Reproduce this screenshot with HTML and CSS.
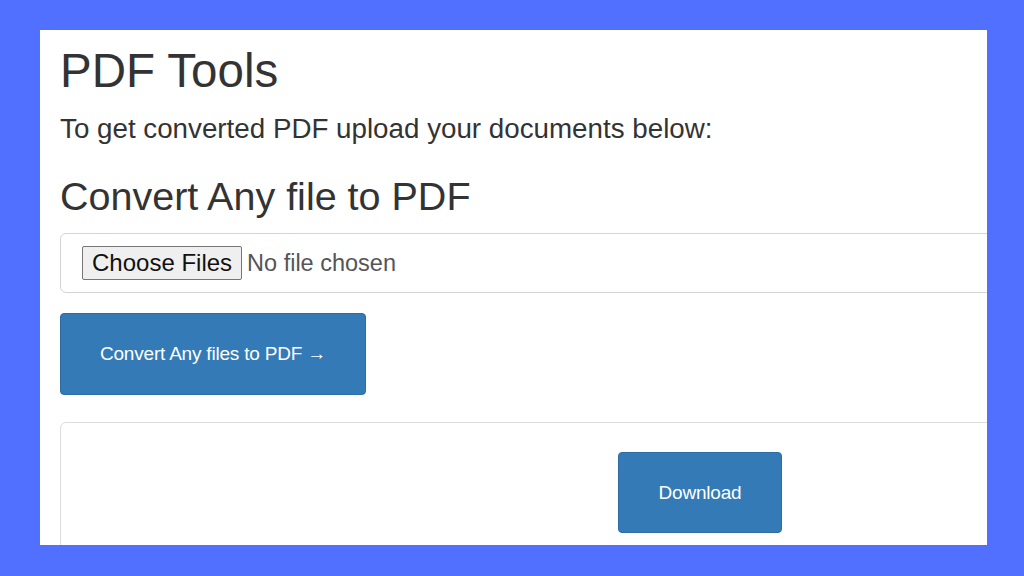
FILE: index.html
```html
<!DOCTYPE html>
<html lang="en">
  <head>
    <meta charset="utf-8" />
    <meta name="viewport" content="width=device-width, initial-scale=1.0" />
    <title>PDF Tools</title>
    <link rel="stylesheet" href="styles.css">
  </head>

  <body>
    <main class="frame">
      <div class="page">
        <h1 class="title">PDF Tools</h1>
        <p class="lead">To get converted PDF upload your documents below:</p>
        <h2 class="section-title">Convert Any file to PDF</h2>
        <div class="upload-box">
          <input id="files" class="file-input" type="file" multiple />
        </div>
        <button class="btn btn-convert" type="button">Convert Any files to PDF &rarr;</button>
        <div class="result-box">
          <button class="btn btn-download" type="button">Download</button>
        </div>
      </div>
    </main>
  </body>
</html>
```

FILE: styles.css
```css
html,
body {
  margin: 0;
  height: 100%;
}

body {
  background: #5170ff;
  font-family: "Liberation Sans", Arial, sans-serif;
  color: #333;
  overflow: hidden;
}

.frame {
  box-sizing: border-box;
  width: 947px;
  height: 515px;
  margin: 30px 0 0 40px;
  background: #fff;
  overflow: hidden;
}

.page {
  width: 1280px;
  padding: 17px 0 0 20px;
}

.title {
  margin: 0;
  font-size: 47.5px;
  line-height: 48px;
  font-weight: 400;
}

.lead {
  margin: 18px 0 0;
  font-size: 27.75px;
  line-height: 32px;
}

.section-title {
  margin: 29px 0 0;
  font-size: 39.5px;
  line-height: 44px;
  font-weight: 400;
}

.upload-box {
  box-sizing: border-box;
  display: flex;
  align-items: center;
  height: 60px;
  margin-top: 15px;
  padding: 0 21px;
  border: 1px solid #d4d4d4;
  border-radius: 6px;
}

.file-input {
  font-family: "Liberation Sans", Arial, sans-serif;
  font-size: 23.5px;
  color: #555;
}

.file-input::file-selector-button {
  box-sizing: border-box;
  height: 34px;
  margin-right: 5px;
  padding: 0 9px;
  font-family: "Liberation Sans", Arial, sans-serif;
  font-size: 24px;
  color: #111;
  background: #efefef;
  border: 1px solid #767676;
  border-radius: 2px;
}

.btn {
  display: block;
  box-sizing: border-box;
  height: 82px;
  padding: 0;
  font-family: "Liberation Sans", Arial, sans-serif;
  font-size: 19px;
  letter-spacing: -0.2px;
  color: #fff;
  background: #337ab7;
  border: 1px solid #2e6da4;
  border-radius: 4px;
}

.btn-convert {
  width: 306px;
  margin-top: 20px;
}

.result-box {
  box-sizing: border-box;
  height: 200px;
  margin-top: 27px;
  padding-top: 29px;
  border: 1px solid #dcdcdc;
  border-radius: 6px;
}

.btn-download {
  width: 164px;
  height: 81px;
  margin: 0 auto;
}
```
